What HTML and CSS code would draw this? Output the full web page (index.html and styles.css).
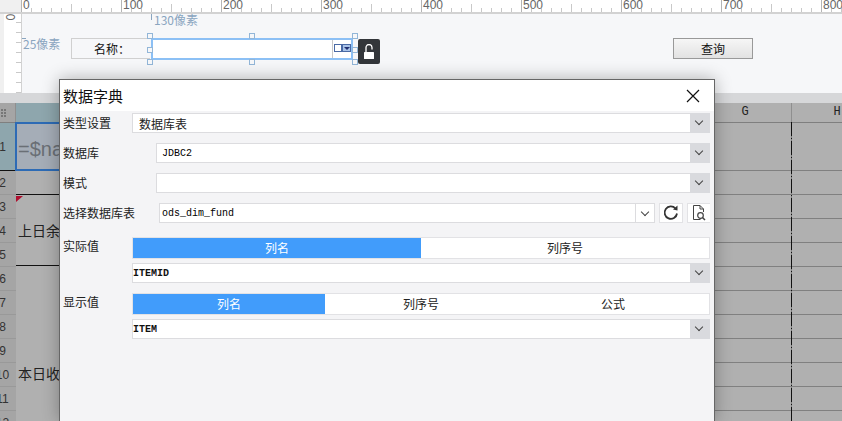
FILE: index.html
```html
<!DOCTYPE html>
<html lang="zh-CN">
<head>
    <meta charset="UTF-8">
    <title>数据字典</title>
    <link rel="stylesheet" href="styles.css">
</head>
<body>
<div class="designer">

    <!-- top ruler -->
    <div class="ruler-top">
        <div class="ruler-corner"></div>
        <div class="ruler-scale">
            <span>0</span><span>100</span><span>200</span><span>300</span><span>400</span><span>500</span><span>600</span><span>700</span><span>800</span>
        </div>
    </div>

    <!-- parameter pane -->
    <div class="param-pane">
        <div class="ruler-left"><span class="ruler-zero">0</span></div>
        <div class="canvas">
            <span class="guide guide-x">130像素</span>
            <span class="guide guide-y">25像素</span>
            <div class="name-label">名称：</div>
            <div class="combo">
                <div class="combo-icon"><i></i><b></b></div>
                <i class="handle h1"></i><i class="handle h2"></i><i class="handle h3"></i>
                <i class="handle h4"></i><i class="handle h5"></i>
                <i class="handle h6"></i><i class="handle h7"></i><i class="handle h8"></i>
            </div>
            <div class="lock">
                <svg width="12" height="16" viewBox="0 0 12 16"><path d="M3 8V3.500a3 3 0 0 1 6 0V5.500" fill="none" stroke="#fff" stroke-width="1.300"/><rect x="1" y="8" width="10" height="7" rx="0.500" fill="#fff"/></svg>
            </div>
            <button class="query-btn">查询</button>
        </div>
    </div>

    <!-- sheet behind the dialog -->
    <div class="sheet">
        <div class="sheet-strip"></div>
        <div class="col-head">
            <div class="corner"><svg width="8" height="8" viewBox="0 0 8 8"><path d="M0 0h2v2H0zM3 0h2v2H3zM0 3h2v2H0zM3 3h2v2H3zM0 6h2v2H0zM3 6h2v2H3z" fill="#777"/></svg></div>
            <div class="col-blue"></div>
            <div class="col col-g">G</div>
            <div class="col col-h">H</div>
        </div>
        <div class="rows">
            <div class="row row-1"><span class="row-no no-1">1</span><div class="cell-name">=$na</div></div>
            <div class="row row-2"><span class="row-no">2</span></div>
            <div class="row"><span class="row-no">3</span></div>
            <div class="row"><span class="row-no">4</span></div>
            <div class="row"><span class="row-no">5</span></div>
            <div class="row"><span class="row-no">6</span></div>
            <div class="row"><span class="row-no">7</span></div>
            <div class="row"><span class="row-no">8</span></div>
            <div class="row"><span class="row-no">9</span></div>
            <div class="row"><span class="row-no">10</span></div>
            <div class="row"><span class="row-no">11</span></div>
            <div class="row"><span class="row-no">12</span></div>
            <div class="merged merged-a"><i class="flag"></i>上日余</div>
            <div class="merged merged-b">本日收</div>
        </div>
        <div class="dash-line"></div>
    </div>

    <!-- dictionary dialog -->
    <div class="dialog">
        <div class="dialog-title">
            <span>数据字典</span>
            <svg class="close" width="14" height="14" viewBox="0 0 14 14"><path d="M1 1l12 12M13 1L1 13" stroke="#111" stroke-width="1.200" fill="none"/></svg>
        </div>
        <div class="dialog-body">
            <div class="form-row">
                <label class="label">类型设置</label>
                <div class="select sel-wide"><span>数据库表</span><i class="arrow"></i></div>
            </div>
            <div class="form-row">
                <label class="label">数据库</label>
                <div class="select sel-narrow"><span class="mono mono-thin mono-jdbc">JDBC2</span><i class="arrow"></i></div>
            </div>
            <div class="form-row">
                <label class="label">模式</label>
                <div class="select sel-narrow"><span></span><i class="arrow"></i></div>
            </div>
            <div class="form-row form-row-last">
                <label class="label">选择数据库表</label>
                <div class="table-pick">
                    <div class="select-flat"><span class="mono mono-thin">ods_dim_fund</span><i class="arrow-small"></i></div>
                    <div class="icon-btn">
                        <svg width="18" height="18" viewBox="0 0 18 18"><path d="M13.500 4.500A6.200 6.200 0 1 0 15 9.500" fill="none" stroke="#333" stroke-width="1.800"/><path d="M11 5.500L15.500 6.500 15.500 1.500z" fill="#333"/></svg>
                    </div>
                    <div class="icon-btn">
                        <svg width="16" height="18" viewBox="0 0 16 18"><path d="M9.500 15.500H2.500V1.500H9L12.500 5V8M9 1.500V5H12.500" fill="none" stroke="#444"/><circle cx="9.500" cy="11.500" r="2.800" fill="none" stroke="#444" stroke-width="1.200"/><path d="M11.500 13.500L14 16" stroke="#444" stroke-width="1.500"/></svg>
                    </div>
                </div>
            </div>

            <div class="value-block">
                <label class="label">实际值</label>
                <div class="value-controls">
                    <div class="tabs tabs-two">
                        <div class="tab active">列名</div>
                        <div class="tab">列序号</div>
                    </div>
                    <div class="select sel-full"><span class="mono">ITEMID</span><i class="arrow"></i></div>
                </div>
            </div>
            <div class="value-block">
                <label class="label">显示值</label>
                <div class="value-controls">
                    <div class="tabs tabs-three">
                        <div class="tab active">列名</div>
                        <div class="tab">列序号</div>
                        <div class="tab">公式</div>
                    </div>
                    <div class="select sel-full"><span class="mono">ITEM</span><i class="arrow"></i></div>
                </div>
            </div>
        </div>
    </div>

</div>
</body>
</html>
```

FILE: styles.css
```css
/* --- Page --- */
html, body {
    margin: 0;
    height: 100%;
    overflow: hidden;
}
body {
    font-family: "Noto Sans CJK SC", "Liberation Sans", sans-serif;
    font-size: 12px;
    color: #111;
    background: #f0f0f0;
}
.designer {
    position: relative;
    width: 842px;
    height: 421px;
    overflow: hidden;
}

/* --- Rulers --- */
.ruler-top {
    display: flex;
    height: 12px;
    border-bottom: 2px solid #d2d2d2;
}
.ruler-corner {
    flex: 0 0 21px;
    background: #f0f0f0;
}
.ruler-scale {
    flex: 1;
    display: flex;
    background-color: #fff;
    background-image:
        repeating-linear-gradient(90deg, #b5b5b5 0 1px, transparent 1px 100px),
        repeating-linear-gradient(90deg, #c9c9c9 0 1px, transparent 1px 50px),
        repeating-linear-gradient(90deg, #c9c9c9 0 1px, transparent 1px 10px);
    background-position: 0 0, 0 4px, 0 8px;
    background-repeat: no-repeat;
}
.ruler-scale span {
    flex: 0 0 100px;
    box-sizing: border-box;
    padding-left: 2px;
    font-family: "Liberation Sans Narrow", "Liberation Sans", sans-serif;
    font-size: 12px;
    line-height: 11px;
    color: #666;
}
.param-pane {
    display: flex;
    height: 79px;
}
.ruler-left {
    width: 17px;
    margin-left: 4px;
    background-color: #fff;
    background-image: repeating-linear-gradient(180deg, #c9c9c9 0 1px, transparent 1px 10px);
    background-size: 5px 100%;
    background-position: right 8px;
    background-repeat: no-repeat;
    border-right: 1px solid #d2d2d2;
}
.ruler-zero {
    display: block;
    width: 8px;
    margin: -2px 0 0 2px;
    font-family: "Liberation Sans", sans-serif;
    font-size: 12px;
    line-height: 10px;
    text-align: center;
    color: #666;
    transform: rotate(90deg);
}

/* --- Parameter canvas --- */
.canvas {
    position: relative;
    flex: 1;
    background: #f6f7f9;
}
.guide {
    position: absolute;
    font-family: "Liberation Sans Narrow", "Noto Sans CJK SC", sans-serif;
    font-size: 12px;
    line-height: 14px;
    color: #8aa5bf;
}
.guide::before {
    content: "";
    position: absolute;
    background: #8aa5bf;
}
.guide-x { left: 132px; top: -1px; }
.guide-x::before { left: -3px; top: 1px; width: 1px; height: 6px; }
.guide-y { left: 1px; top: 23px; }
.guide-y::before { left: -1px; top: 1px; width: 4px; height: 1px; }
.name-label {
    position: absolute;
    left: 49px;
    top: 24px;
    width: 79px;
    height: 21px;
    line-height: 19px;
    padding-left: 22px;
    box-sizing: border-box;
    border: 1px solid #d0d0d0;
    border-right: 0;
    color: #111;
}
.combo {
    position: absolute;
    left: 129px;
    top: 24px;
    width: 202px;
    height: 22px;
    box-sizing: border-box;
    background: #fff;
    border: 2px solid #8cc0f5;
}
.combo-icon {
    position: absolute;
    right: 0;
    top: 0;
    width: 19px;
    height: 18px;
    display: flex;
    align-items: flex-start;
    padding: 4px 0 0 1px;
    box-sizing: border-box;
    border-left: 1px solid #c8c8c8;
}
.combo-icon i {
    width: 6px;
    height: 6px;
    border: 1px solid #4a6aa5;
    background: #fff;
}
.combo-icon b {
    position: relative;
    width: 7px;
    height: 6px;
    background: #a9c3e8;
    border: 1px solid #4a6aa5;
}
.combo-icon b::after {
    content: "";
    position: absolute;
    left: 0;
    top: 2px;
    margin-left: 1px;
    border: 3px solid transparent;
    border-top: 3px solid #1f2f70;
    border-bottom: 0;
}
.handle {
    position: absolute;
    width: 4px;
    height: 4px;
    background: #f6f7f9;
    border: 1px solid #92b6d8;
}
.h1 { left: -6px; top: -7px; }
.h2 { left: 96px; top: -7px; }
.h3 { right: -7px; top: -7px; }
.h4 { left: -6px; top: 7px; }
.h5 { right: -7px; top: 7px; }
.h6 { left: -6px; bottom: -7px; }
.h7 { left: 96px; bottom: -7px; }
.h8 { right: -7px; bottom: -7px; }
.lock {
    position: absolute;
    left: 336px;
    top: 25px;
    width: 22px;
    height: 25px;
    display: flex;
    align-items: center;
    justify-content: center;
    background: #33363a;
    border-radius: 2px;
}
.query-btn {
    position: absolute;
    left: 651px;
    top: 24px;
    width: 80px;
    height: 21px;
    padding: 0;
    box-sizing: border-box;
    font-family: inherit;
    font-size: 12px;
    color: #111;
    border: 1px solid #999;
    background: linear-gradient(#f6f6f6, #e2e2e2);
}

/* --- Sheet, dimmed by the dialog mask --- */
.sheet {
    position: relative;
    height: 328px;
    background: #b0b0b0;
}
.sheet-strip {
    height: 10px;
    background: #d6d7d9;
}
.col-head {
    display: flex;
    height: 20px;
    box-sizing: border-box;
    border-bottom: 1px solid #7f7f7f;
}
.corner {
    flex: none;
    width: 16px;
    box-sizing: border-box;
    display: flex;
    align-items: center;
    padding-left: 1px;
    background: #a5a5a5;
    border-right: 1px solid #8f8f8f;
}
.col-blue {
    flex: none;
    width: 43px;
    background: #8ea6ad;
}
.col {
    flex: none;
    box-sizing: border-box;
    text-align: center;
    line-height: 19px;
    font-family: "Liberation Mono", monospace;
    color: #222;
}
.col-g {
    margin-left: 640px;
    width: 93px;
    border-right: 1px solid #8f8f8f;
}
.col-h {
    width: 90px;
}
.rows {
    position: relative;
    border-left: 16px solid #a5a5a5;
}
.row {
    position: relative;
    height: 23px;
    border-bottom: 1px solid #808080;
}
.row-1 {
    height: 47px;
}
.row-no {
    position: absolute;
    left: -16px;
    top: 0;
    bottom: -1px;
    width: 5px;
    padding-right: 11px;
    display: flex;
    align-items: center;
    justify-content: center;
    white-space: nowrap;
    color: #333;
    border-bottom: 1px solid #999;
    font-family: "Liberation Sans", sans-serif;
}
.no-1 {
    background: #8ea6ad;
    border-bottom-color: #111;
}
.row-2::after {
    content: "";
    position: absolute;
    left: 0;
    bottom: -1px;
    width: 43px;
    height: 1px;
    background: #111;
}
.cell-name {
    position: absolute;
    left: -1px;
    top: -1px;
    width: 60px;
    height: 49px;
    line-height: 50px;
    padding-left: 1px;
    box-sizing: border-box;
    border: 2px solid #2d6bb5;
    background: #a5adb7;
    color: #6a6f75;
    font-family: "Liberation Sans", sans-serif;
    font-size: 20px;
}
.merged {
    position: absolute;
    left: 0;
    width: 43px;
    padding-left: 2px;
    box-sizing: border-box;
    display: flex;
    align-items: center;
    white-space: nowrap;
    background: #b0b0b0;
    font-size: 14px;
    color: #222;
}
.merged-a {
    top: 72px;
    height: 71px;
    border-bottom: 1px solid #111;
}
.merged-b {
    top: 143px;
    height: 214px;
}
.flag {
    position: absolute;
    left: 0;
    top: 1px;
    border-top: 6px solid #b01030;
    border-right: 7px solid transparent;
}
.dash-line {
    position: absolute;
    left: 791px;
    top: 29px;
    bottom: 0;
    width: 1px;
    background: repeating-linear-gradient(180deg, #111 0 14px, #808080 14px 16px, #111 16px 17px, #808080 17px 19px);
}

/* --- Dialog --- */
.dialog {
    position: absolute;
    left: 59px;
    top: 79px;
    width: 656px;
    height: 342px;
    box-sizing: border-box;
    background: #f4f4f6;
    border: 1px solid #666;
    border-bottom: 0;
    box-shadow: 0 0 16px rgba(0, 0, 0, 0.3);
}
.dialog-title {
    display: flex;
    justify-content: space-between;
    align-items: center;
    height: 31px;
    padding: 0 14px 0 3px;
    background: #fff;
    font-size: 15px;
    color: #111;
}
.dialog-body {
    padding: 2px 4px 0 3px;
}
.form-row {
    display: flex;
    align-items: center;
    height: 20px;
    margin-bottom: 10px;
}
.form-row-last {
    margin-bottom: 14px;
}
.label {
    flex: 0 0 69px;
    font-size: 12px;
    line-height: 18px;
    white-space: nowrap;
    color: #222;
}
.select {
    position: relative;
    display: flex;
    align-items: center;
    height: 20px;
    box-sizing: border-box;
    padding: 0 20px 0 6px;
    background: #fff;
    border: 1px solid #dcdcdf;
    font-size: 12px;
    color: #222;
}
.sel-wide {
    flex: 1;
}
.sel-narrow {
    flex: 1;
    margin-left: 24px;
}
.sel-full {
    padding-left: 0;
}
.arrow {
    position: absolute;
    right: -1px;
    top: -1px;
    width: 20px;
    height: 20px;
    background: #d9dade;
}
.arrow::after, .arrow-small::after {
    content: "";
    position: absolute;
    left: 6px;
    top: 5px;
    width: 6px;
    height: 6px;
    box-sizing: border-box;
    border-right: 1px solid #444;
    border-bottom: 1px solid #444;
    transform: rotate(45deg);
}
.mono {
    font-family: "Liberation Mono", monospace;
    font-size: 10px;
    font-weight: 700;
    color: #111;
}
.mono-thin {
    font-weight: 400;
    color: #000;
}
.mono-jdbc {
    margin-left: -1px;
}
.table-pick {
    flex: 1;
    display: flex;
    align-items: center;
    margin-left: 24px;
    gap: 4px;
}
.select-flat {
    position: relative;
    flex: 1;
    display: flex;
    align-items: center;
    height: 20px;
    box-sizing: border-box;
    padding-left: 2px;
    background: #fff;
    border: 1px solid #dcdcdf;
}
.arrow-small {
    position: absolute;
    right: 0;
    top: 0;
    width: 18px;
    height: 18px;
    border-left: 1px solid #dcdcdf;
}
.icon-btn {
    display: flex;
    align-items: center;
    justify-content: center;
    width: 24px;
    height: 20px;
    background: #fff;
    border: 1px solid #e2e2e5;
    box-sizing: border-box;
}
.icon-btn + .icon-btn {
    width: 23px;
    border-right: 0;
}
.value-block {
    display: flex;
    align-items: flex-start;
    margin-bottom: 10px;
}
.value-controls {
    flex: 1;
    display: flex;
    flex-direction: column;
    gap: 4px;
}
.tabs {
    display: grid;
    height: 22px;
    background: #fff;
    border: 1px solid #e2e2e5;
    box-sizing: border-box;
}
.tabs-two { grid-template-columns: 1fr 1fr; }
.tabs-three { grid-template-columns: 1fr 1fr 1fr; }
.tab {
    text-align: center;
    line-height: 20px;
    color: #222;
}
.tab.active {
    background: #419cfb;
    color: #fff;
}
```
